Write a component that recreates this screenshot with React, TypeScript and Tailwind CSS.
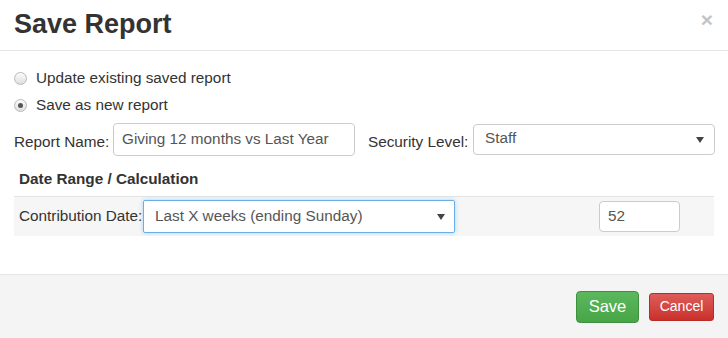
import { ReactNode } from "react";

const font = { fontFamily: '"Liberation Sans", Arial, sans-serif' };

const Caret = () => (
  <svg width="8" height="6" viewBox="0 0 8 6" className="shrink-0">
    <path d="M0 0h8L4 6z" fill="#444" />
  </svg>
);

const Radio = ({ checked, children }: { checked?: boolean; children: ReactNode }) => (
  <label className="flex h-[27px] items-center gap-[9px] pl-[14px]">
    <span className="flex h-[13px] w-[13px] items-center justify-center rounded-full border border-[#b9b9b9] bg-gradient-to-b from-[#fcfcfc] to-[#dedede]">
      {checked && <span className="h-[5px] w-[5px] rounded-full bg-[#555]" />}
    </span>
    <span className="text-[15.3px] text-[#333]">{children}</span>
  </label>
);

export default function App() {
  return (
    <div className="flex h-[338px] w-full flex-col bg-white" style={font}>
      {/* header */}
      <div className="flex h-[51px] shrink-0 items-start justify-between border-b border-[#e5e5e5] pl-[14px] pr-[15px]">
        <h4 className="mt-[6px] text-[27px] font-bold leading-[36px] text-[#333]">Save Report</h4>
        <span className="mt-[6px] text-[21px] font-bold leading-[28px] text-[#c4c4c4]">×</span>
      </div>

      {/* body */}
      <div className="flex-1 pt-[14px]">
        <Radio>Update existing saved report</Radio>
        <Radio checked>Save as new report</Radio>

        <div className="mt-[4px] flex h-[33px] items-center pl-[14px]">
          <span className="w-[99px] pt-[6px] text-[15.3px] text-[#333]">Report Name:</span>
          <div className="flex h-[33px] w-[242px] items-center rounded-[4px] border border-[#ccc] px-[8px] text-[15.3px] text-[#555]">
            Giving 12 months vs Last Year
          </div>
          <span className="ml-[13px] w-[105px] pt-[6px] text-[15.3px] text-[#333]">Security Level:</span>
          <div className="flex h-[31px] w-[242px] items-center justify-between rounded-[4px] border border-[#ccc] pl-[11px] pr-[10px] text-[15.3px] text-[#555]">
            <span className="-mt-[3px]">Staff</span>
            <Caret />
          </div>
        </div>

        <div className="mt-[7px] flex h-[33px] items-center pl-[19px] text-[15.3px] font-bold text-[#333]">
          Date Range / Calculation
        </div>

        <div className="mx-[14px] flex h-[40px] items-center border-t border-[#e3e3e3] bg-[#f6f6f6] pl-[5px]">
          <span className="w-[124px] whitespace-nowrap text-[15.3px] text-[#333]">Contribution Date:</span>
          <div className="flex h-[33px] w-[312px] items-center justify-between rounded-[2px] border border-[#66afe9] bg-white pl-[11px] pr-[9px] text-[15.3px] text-[#555] shadow-[0_0_4px_rgba(102,175,233,0.5)]">
            <span>Last X weeks (ending Sunday)</span>
            <Caret />
          </div>
          <div className="ml-[144px] flex h-[31px] w-[81px] items-center rounded-[4px] border border-[#ccc] bg-white px-[8px] text-[15.3px] text-[#555]">
            52
          </div>
        </div>
      </div>

      {/* footer */}
      <div className="flex h-[64px] shrink-0 items-center justify-end gap-[10px] border-t border-[#e5e5e5] bg-[#f4f4f4] pr-[14px]">
        <button className="h-[32px] w-[63px] rounded-[4px] border border-[#3e8f3e] bg-gradient-to-b from-[#5cb85c] to-[#47a447] text-[16.5px] text-white">
          Save
        </button>
        <button className="h-[28px] w-[65px] rounded-[3px] border border-[#b92c28] bg-gradient-to-b from-[#de5c58] to-[#c9302c] text-[14px] text-white">
          Cancel
        </button>
      </div>
    </div>
  );
}
